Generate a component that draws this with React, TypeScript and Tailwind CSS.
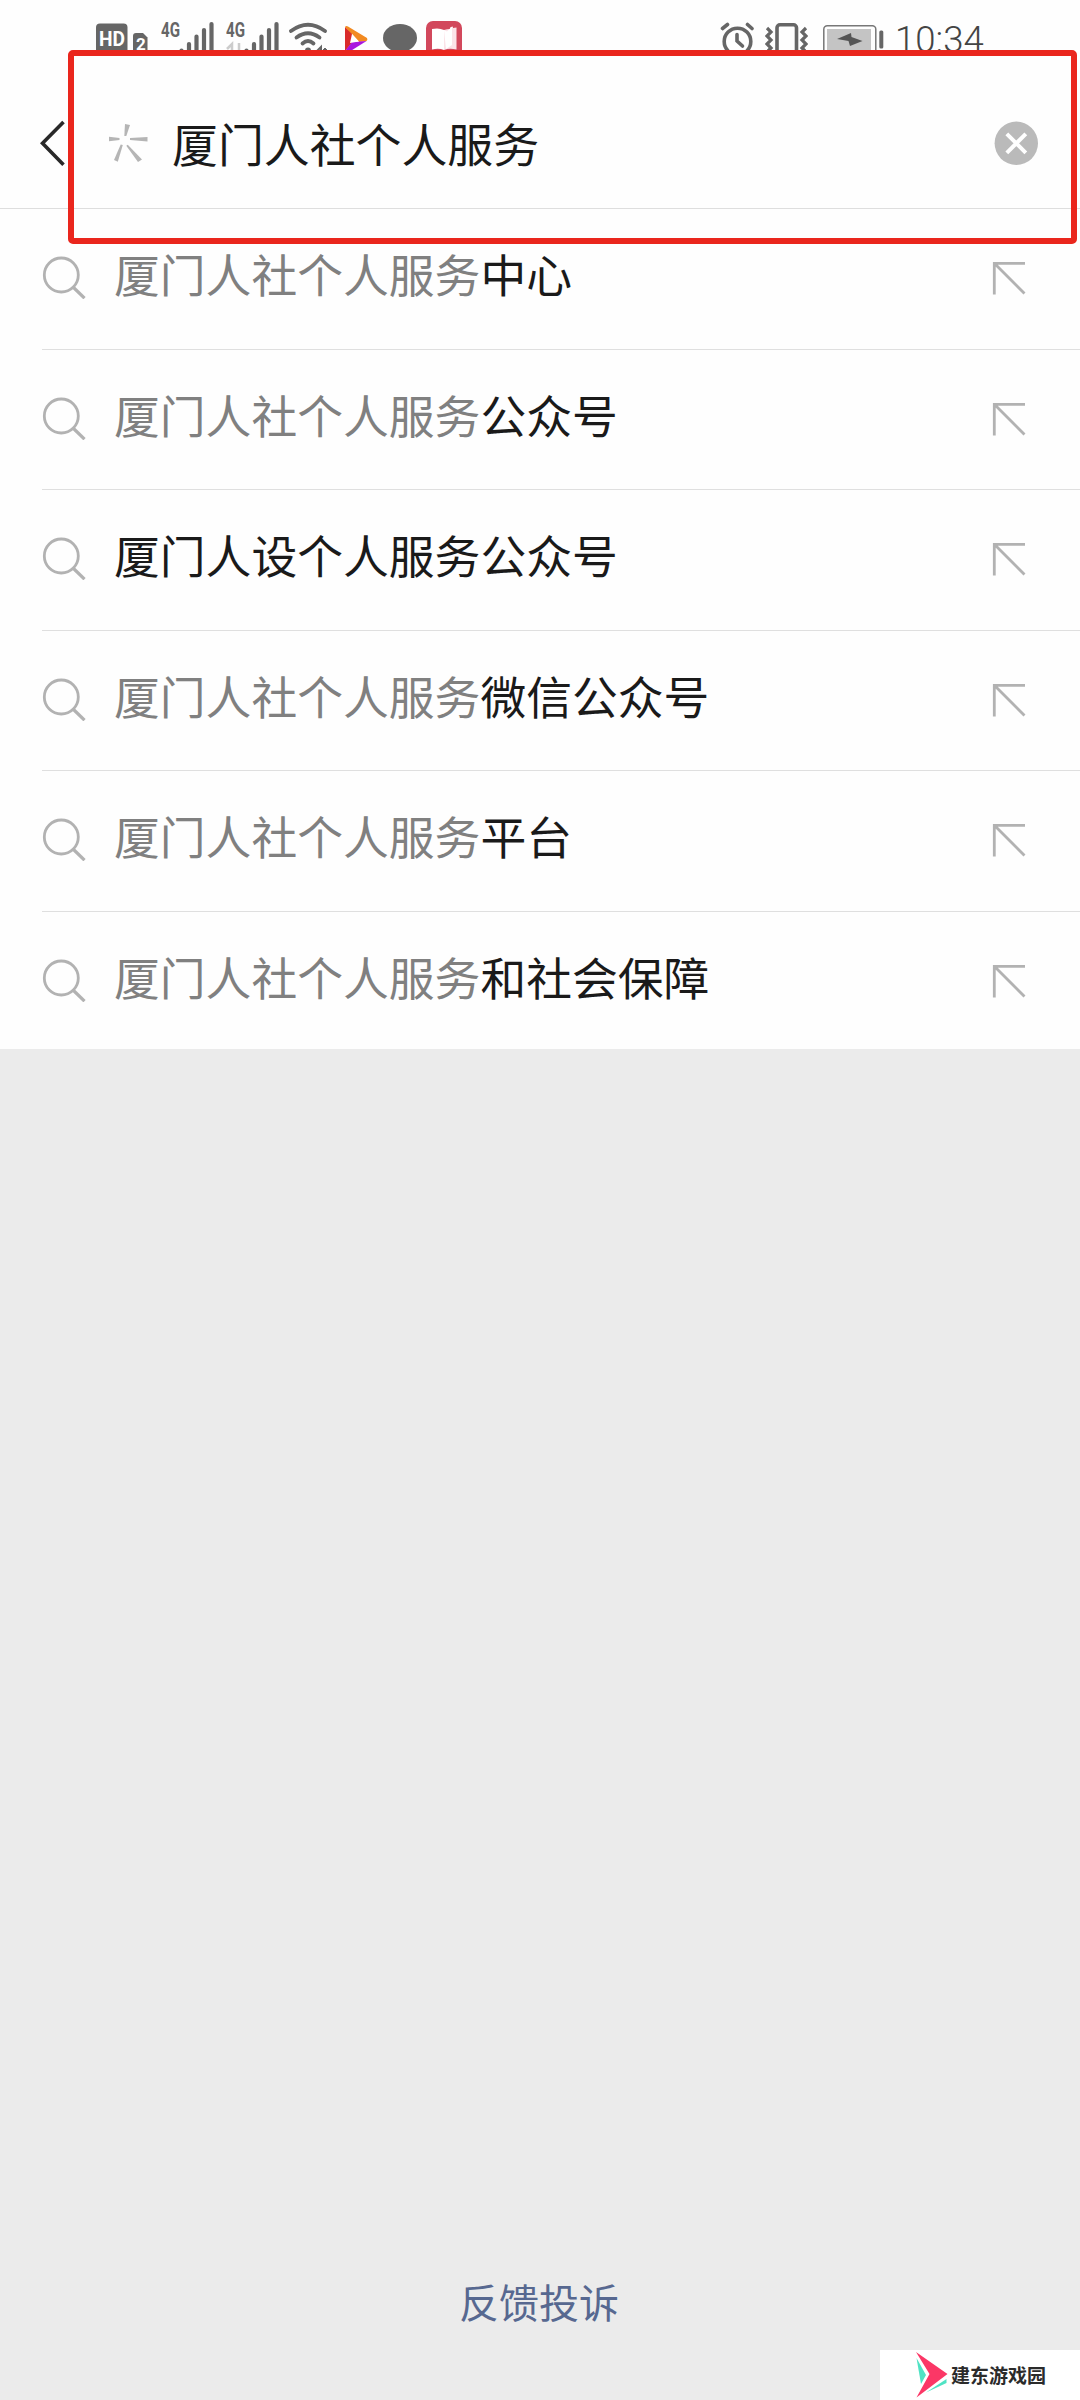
import type { ReactNode } from 'react'

interface Suggestion {
  matched: string
  rest: string
}

const KEYWORD = '厦门人社个人服务'

const suggestions: Suggestion[] = [
  { matched: KEYWORD, rest: '中心' },
  { matched: KEYWORD, rest: '公众号' },
  { matched: '', rest: '厦门人设个人服务公众号' },
  { matched: KEYWORD, rest: '微信公众号' },
  { matched: KEYWORD, rest: '平台' },
  { matched: KEYWORD, rest: '和社会保障' },
]

interface StatusIconProps {
  viewBox: string
  className: string
  children: ReactNode
}

function StatusIcon({ viewBox, className, children }: StatusIconProps) {
  return (
    <svg viewBox={viewBox} className={`h-[54px] shrink-0 ${className}`} fill="none">
      {children}
    </svg>
  )
}

function Signal({ className, faded }: { className: string; faded?: boolean }) {
  return (
    <StatusIcon viewBox="0 0 55 54" className={`w-[55px] ${className}`}>
      <text x="0" y="36.5" fontSize="20" fontWeight="700" fill="#666" textLength="19" lengthAdjust="spacingAndGlyphs" fontFamily="Roboto, sans-serif">4G</text>
      {faded && <path d="M1 49L6 44V54M13 43V54" stroke="#ccc" strokeWidth="2.5" />}
      <path d="M20.500 50.500V56M28 44V56M35.500 36.500V56M43 30V56M50.500 24V56" stroke="#666" strokeWidth="4.200" strokeLinecap="round" />
    </StatusIcon>
  )
}

function StatusBar() {
  return (
    <div className="flex h-[54px] items-start pl-24">
      {/* HD */}
      <StatusIcon viewBox="0 0 32 54" className="w-8">
        <rect y="23.500" width="31.500" height="36" rx="4" fill="#666" />
        <text x="3" y="46" fontSize="20" fontWeight="700" fill="#fff" textLength="26" lengthAdjust="spacingAndGlyphs" fontFamily="Roboto, sans-serif">HD</text>
      </StatusIcon>
      <StatusIcon viewBox="0 0 15 54" className="ml-[5px] w-[15px]">
        <path d="M0 36Q0 33 3 33H10L14.500 37.500V56H0Z" fill="#666" />
        <text x="3" y="49.500" fontSize="17" fontWeight="700" fill="#fff" fontFamily="Roboto, sans-serif">2</text>
      </StatusIcon>
      <Signal className="ml-[13px]" />
      <Signal className="ml-[10px]" faded />
      {/* wifi */}
      <StatusIcon viewBox="0 0 42 54" className="ml-[8px] w-[42px]">
        <g stroke="#666" strokeWidth="3.800" strokeLinecap="round">
          <path d="M2 31Q19 18.500 36 31" />
          <path d="M7.500 37.500Q19 29 30.500 37.500" />
          <path d="M13.500 43.500Q19 38.500 24.500 43.500" />
        </g>
        <circle cx="19" cy="50.500" r="3" fill="#666" />
        <path d="M28 51L32 47V54M36 48V54M34 50H38" stroke="#666" strokeWidth="2" />
      </StatusIcon>
      <StatusIcon viewBox="0 0 23 54" className="ml-[14px] w-[23px]">
        <path d="M0 27L7 33V43L0 51Z" fill="#d92b2b" />
        <path d="M0 27Q1 25.500 3 26.500L22 38Q23 40 21.500 41L14 42L7 34Z" fill="#f28a20" />
        <path d="M0 51L7 42L21.500 41L4 52Q1 53 0 51Z" fill="#a915df" />
        <path d="M7 34L14 41.500L5 43Z" fill="#fff" />
      </StatusIcon>
      <StatusIcon viewBox="0 0 34 54" className="ml-[15px] w-[34px]">
        <ellipse cx="17" cy="38" rx="17" ry="14" fill="#666" />
      </StatusIcon>
      <StatusIcon viewBox="0 0 36 54" className="ml-[9px] w-9">
        <rect y="21" width="36" height="36" rx="7" fill="#d2485c" />
        <path d="M6 29Q13 27.500 18 30V50Q13 48 6 49.500Z" fill="#fff" />
        <path d="M18 30Q21 29 24 29V27.500L27 26.500V28L30.500 27.500V49.500Q23 48 18 50Z" fill="#fbe3e8" />
        <path d="M18 30L21 31.500L26 26.500V45L20 49Z" fill="#fff" />
      </StatusIcon>
      {/* alarm */}
      <StatusIcon viewBox="0 0 34 54" className="ml-[258px] w-[34px]">
        <g stroke="#666" strokeWidth="3.600" strokeLinecap="round">
          <circle cx="17.500" cy="41.500" r="13.300" />
          <path d="M17 34.500V41L22.500 46" />
          <path d="M2.500 28.500L7.500 24.500M27.500 24.500L32 28.500" />
        </g>
      </StatusIcon>
      {/* vibrate */}
      <StatusIcon viewBox="0 0 43 54" className="ml-[11px] w-[43px]">
        <rect x="12" y="24.800" width="19.500" height="34" rx="3" stroke="#666" strokeWidth="3.600" />
        <path d="M2 28L6 32L2 36L6 40L2 44L6 48L3 51M41 28L37 32L41 36L37 40L41 44L37 48L40 51" stroke="#666" strokeWidth="3.200" />
      </StatusIcon>
      {/* battery */}
      <StatusIcon viewBox="0 0 61 54" className="ml-[15px] w-[61px]">
        <rect x="0.800" y="25.800" width="52" height="32" rx="3.500" stroke="#777" strokeWidth="1.500" />
        <rect x="4" y="29" width="44" height="30" fill="#c4c4c4" />
        <path d="M14 39L28 33L28.500 37L39.500 41L27 46L25.500 41Z" fill="#555" />
        <rect x="56.300" y="30.500" width="4" height="18" rx="1.500" fill="#666" />
      </StatusIcon>
      <span className="ml-[11px] mt-[19px] font-['Roboto',sans-serif] text-[36.500px] leading-[42px] font-light text-[#444]">
        10:34
      </span>
    </div>
  )
}

function SearchHeader() {
  return (
    <div className="flex h-[155px] items-start border-b border-[#dedede] pl-[40px]">
      <svg viewBox="0 0 26 48" className="mt-[65px] h-12 w-[26px]" fill="none">
        <path d="M23.500 3L2.500 24.300L23.500 45.700" stroke="#292929" strokeWidth="3.600" />
      </svg>
      <svg viewBox="0 0 40 40" className="mt-[69px] ml-[42px] h-10 w-10" fill="#b5b5b5">
        <path d="M17 1L22 2L18.300 13H16.300Z" />
        <path d="M39.500 14V18.400L22 17V15Z" />
        <path d="M1 13.700V18.300L11.500 17V15Z" />
        <path d="M14.800 22L9.800 38.800L6 37L12.700 21.500Z" />
        <path d="M19.700 21.800L34 36.500L30 39L18.300 22.800Z" />
      </svg>
      <div className="mt-[56px] ml-[24px] text-[45.900px] leading-[64px] text-[#1a1a1a]">
        {KEYWORD}
      </div>
      <svg viewBox="0 0 44 44" className="mt-[67px] mr-[42px] ml-auto h-11 w-11">
        <circle cx="22.300" cy="22.300" r="21.700" fill="#bababa" />
        <path d="M12.800 12.800L31.800 31.800M31.800 12.800L12.800 31.800" stroke="#fff" strokeWidth="4" />
      </svg>
    </div>
  )
}

function SuggestionRow({ matched, rest }: Suggestion) {
  return (
    <li className="flex h-[140.500px] items-start">
      <svg viewBox="0 0 44 44" className="mt-[46px] ml-[42px] h-11 w-11 shrink-0" fill="none" stroke="#b2b2b2">
        <circle cx="19.300" cy="20" r="17" strokeWidth="2.800" />
        <path d="M31.500 32.500L42.500 43.200" strokeWidth="3.200" />
      </svg>
      <div className="mt-[32px] ml-[28px] text-[45.800px] leading-[64px] whitespace-nowrap text-[#1a1a1a]">
        {matched && <span className="text-[#808080]">{matched}</span>}
        {rest}
      </div>
      <svg viewBox="0 0 34 34" className="mt-[52px] mr-[54px] ml-auto h-[34px] w-[34px] shrink-0" fill="none" stroke="#b2b2b2" strokeWidth="2.800">
        <path d="M33 2.300H2.300V33.500M2.300 2.300L32.500 32.500" />
      </svg>
    </li>
  )
}

export default function App() {
  return (
    <div className="relative flex h-[2400px] w-[1080px] flex-col overflow-hidden bg-[#ebebeb] font-['Noto_Sans_CJK_SC',sans-serif]">
      <div className="h-[1049px] overflow-hidden bg-[#fefefe]">
        <StatusBar />
        <SearchHeader />
        <ul>
          {suggestions.map((item, i) => (
            <div key={item.matched + item.rest}>
              {i > 0 && <div className="-mt-px ml-[42px] h-px bg-[#dfdfdf]" />}
              <SuggestionRow {...item} />
            </div>
          ))}
        </ul>
      </div>

      <div className="mt-auto mb-[69px] pr-[2px] text-center text-[40px] leading-[60px] text-[#576890]">
        反馈投诉
      </div>

      {/* 红框标注 */}
      <div className="absolute top-[50px] left-[68px] h-[194px] w-[1009px] rounded-[5px] border-[6px] border-[#ea261d]" />

      {/* 水印 */}
      <div className="absolute right-0 bottom-0 flex h-[50px] w-[200px] items-center bg-white pl-[35px]">
        <svg viewBox="0 0 34 48" className="h-12 w-[34px] shrink-0">
          <path d="M1 1L32.500 23L1.500 46.500L14.500 23Z" fill="#fb3766" />
          <path d="M1.500 7L11 24L6 33Z" fill="#4fe3c4" />
          <path d="M31.500 28V32L11 41.500Z" fill="#4fe3c4" />
        </svg>
        <span className="mb-[2px] ml-[2px] text-[19px] leading-none font-bold whitespace-nowrap text-[#2b2b2b]">建东游戏园</span>
      </div>
    </div>
  )
}
